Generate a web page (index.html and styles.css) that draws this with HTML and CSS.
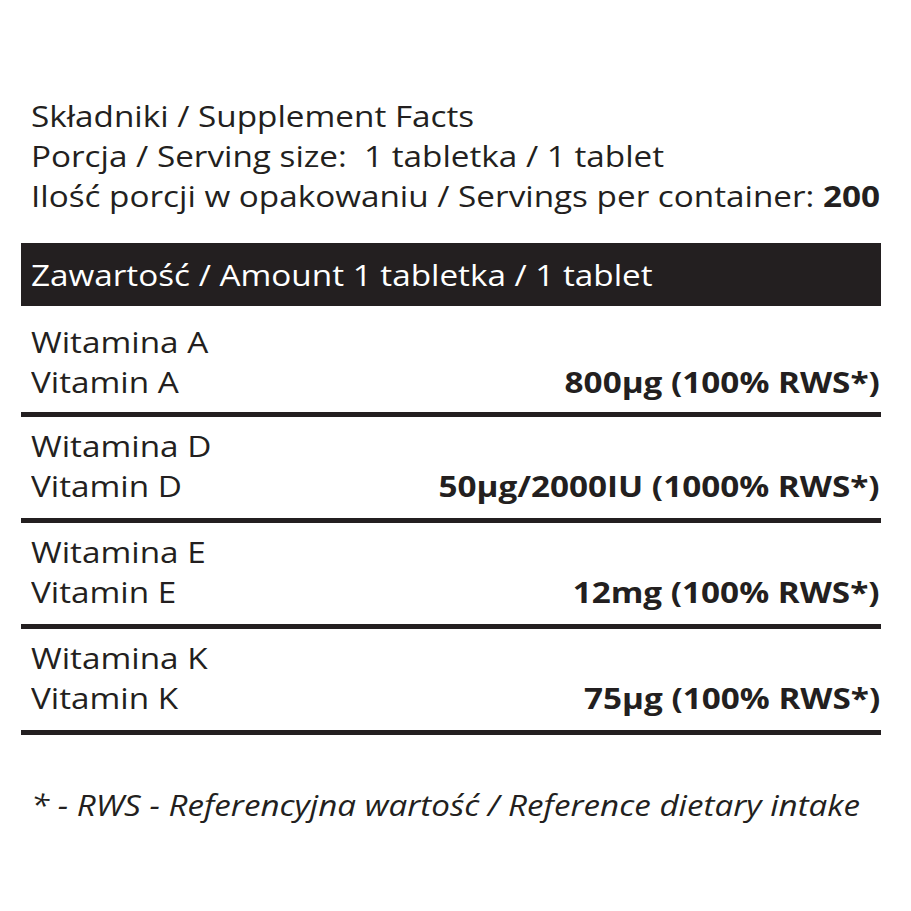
FILE: index.html
```html
<!DOCTYPE html>
<html lang="pl">
<head>
<meta charset="utf-8">
<title>Supplement Facts</title>
<link rel="stylesheet" href="styles.css">
</head>
<body>
<div class="facts">
  <div class="intro">
    <div class="line"><span class="wide">Składniki / Supplement Facts</span></div>
    <div class="line"><span class="wide">Porcja / Serving size:&nbsp; 1 tabletka / 1 tablet</span></div>
    <div class="line"><span class="wide">Ilość porcji w opakowaniu / Servings per container: <b>200</b></span></div>
  </div>
  <div class="bar"><span class="wide">Zawartość / Amount 1 tabletka / 1 tablet</span></div>
  <div class="row first">
    <div class="name"><span class="wide">Witamina A<br>Vitamin A</span></div>
    <div class="value"><span class="wide">800µg (100% RWS*)</span></div>
  </div>
  <div class="row">
    <div class="name"><span class="wide">Witamina D<br>Vitamin D</span></div>
    <div class="value"><span class="wide">50µg/2000IU (1000% RWS*)</span></div>
  </div>
  <div class="row">
    <div class="name"><span class="wide">Witamina E<br>Vitamin E</span></div>
    <div class="value"><span class="wide">12mg (100% RWS*)</span></div>
  </div>
  <div class="row">
    <div class="name"><span class="wide">Witamina K<br>Vitamin K</span></div>
    <div class="value"><span class="wide">75µg (100% RWS*)</span></div>
  </div>
  <div class="note"><span class="wide">* - RWS - Referencyjna wartość / Reference dietary intake</span></div>
</div>
</body>
</html>
```
FILE: styles.css
```css
html, body {
  margin: 0;
  padding: 0;
  background: #ffffff;
}
body {
  font-family: "Open Sans", "Noto Sans", sans-serif;
  color: #231f20;
  font-size: 29px;
  line-height: 40px;
}
.wide {
  display: inline-block;
  transform: scaleX(1.147);
  transform-origin: left center;
  white-space: nowrap;
}
.facts {
  margin: 96px 0 0 21px;
  width: 860px;
}
.intro {
  padding-left: 10px;
}
.intro b {
  font-weight: 700;
}
.bar {
  margin-top: 27px;
  height: 63px;
  line-height: 63px;
  background: #231f20;
  color: #ffffff;
  padding-left: 10px;
}
.row {
  display: flex;
  justify-content: space-between;
  align-items: flex-end;
  padding: 9px 1px 12px 10px;
  border-bottom: 5px solid #231f20;
}
.row.first {
  padding-top: 16px;
  padding-bottom: 10px;
}
.value {
  font-weight: 700;
}
.value .wide {
  transform-origin: right center;
}
.note {
  margin-top: 50px;
  padding-left: 10px;
  font-style: italic;
}
.note .wide {
  transform: scaleX(1.144);
}
```
